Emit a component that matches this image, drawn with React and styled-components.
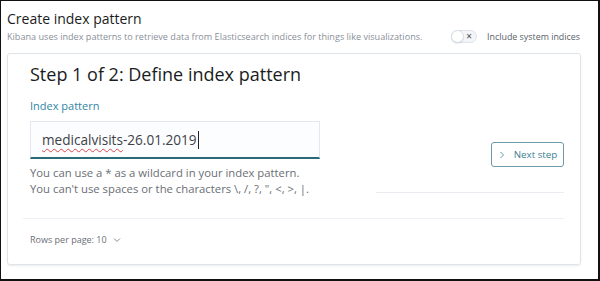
import React from 'react'
import styled, { createGlobalStyle } from 'styled-components'

const Global = createGlobalStyle`
  html, body { margin: 0; padding: 0; background: #fff; }
  body { font-family: "Open Sans", "Noto Sans", sans-serif; color: #1a1c21; }
`

const Frame = styled.div`
  box-sizing: border-box;
  width: 600px;
  height: 281px;
  border: 1px solid #111;
  border-right-width: 2px;
  border-bottom-width: 2px;
  padding: 7px 17px 0 6px;
`

const Header = styled.header`
  display: flex;
  align-items: flex-end;
  justify-content: space-between;
`

const Title = styled.h1`
  margin: 0;
  font-size: 14px;
  font-weight: 500;
  line-height: 22px;
  color: #1a1c21;
`

const Subtitle = styled.p`
  margin: 0;
  font-size: 9.1px;
  line-height: 13px;
  color: #8a8f99;
`

const SwitchWrap = styled.label`
  display: flex;
  align-items: center;
  gap: 10px;
  font-size: 8.9px;
  color: #5a5f69;
  line-height: 13px;
  margin-right: 1px;
`

const Track = styled.span`
  position: relative;
  box-sizing: border-box;
  width: 26px;
  height: 13px;
  border-radius: 7px;
  background: #f3f5f8;
  border: 1px solid #dfe3ea;
  display: flex;
  align-items: center;
  justify-content: flex-end;
  padding-right: 4px;
  font-size: 10px;
  color: #45494f;
`

const Knob = styled.span`
  position: absolute;
  left: -1px;
  top: -1px;
  width: 13px;
  height: 13px;
  box-sizing: border-box;
  border-radius: 50%;
  background: #fff;
  border: 1px solid #d6dbe3;
  box-shadow: 0 1px 1px rgba(0,0,0,0.08);
`

const Panel = styled.section`
  margin-top: 10px;
  box-sizing: border-box;
  height: 212px;
  border: 1px solid #dfe3ea;
  border-radius: 3px;
  box-shadow: 0 1px 2px rgba(0,0,0,0.08);
  padding: 7px 16px 0 15px;
`

const StepTitle = styled.h2`
  margin: 0 0 0 7px;
  font-size: 18px;
  font-weight: 400;
  line-height: 26px;
  color: #1a1c21;
`

const Body = styled.div`
  display: flex;
  justify-content: space-between;
  margin-top: 11px;
  padding-left: 7px;
`

const FormCol = styled.div`
  width: 290px;
`

const Label = styled.div`
  font-size: 11px;
  line-height: 15px;
  color: #2f86a6;
  margin-bottom: 8px;
`

const Input = styled.div`
  box-sizing: border-box;
  height: 38px;
  background: #fcfdfe;
  border: 1px solid #e4e8ee;
  border-bottom: 2px solid #2b6b78;
  padding: 0 0 0 11px;
  display: flex;
  align-items: center;
  font-size: 13.6px;
  color: #3f4247;
`

const Squiggle = styled.span`
  text-decoration: underline wavy #e0464a;
  text-decoration-thickness: 1px;
  text-underline-offset: 3px;
`

const Caret = styled.span`
  display: inline-block;
  width: 1px;
  height: 18px;
  background: #222;
  margin-left: 1px;
`

const Help = styled.p`
  margin: 6px 0 0;
  font-size: 11.3px;
  line-height: 16px;
  color: #6a6e75;
`

const ActionCol = styled.div`
  width: 188px;
  display: flex;
  flex-direction: column;
  align-items: flex-end;
  padding-top: 44px;
`

const NextButton = styled.button`
  box-sizing: border-box;
  height: 25px;
  width: 73px;
  background: #fff;
  border: 1px solid #6d9aa6;
  border-radius: 3px;
  font-family: inherit;
  font-size: 9.8px;
  color: #3c7f92;
  display: flex;
  align-items: center;
  justify-content: center;
  gap: 8px;
  padding: 0;
`

const ShortRule = styled.hr`
  align-self: stretch;
  margin: 25px 0 0;
  border: 0;
  border-top: 1px solid #e9ecf0;
`

const Rule = styled.hr`
  margin: 21px 0 0;
  border: 0;
  border-top: 1px solid #eceff3;
`

const Rows = styled.div`
  margin: 14px 0 0 7px;
  font-size: 9px;
  line-height: 14px;
  color: #6a6e75;
  display: flex;
  align-items: center;
  gap: 6px;
`

const Chevron = ({ dir }) => (
  <svg width="8" height="8" viewBox="0 0 16 16" fill="none" stroke="currentColor" strokeWidth="1.6">
    {dir === 'right' ? <path d="M5 2l6 6-6 6" /> : <path d="M2 5l6 6 6-6" />}
  </svg>
)

export default function App() {
  return (
    <Frame>
      <Global />
      <Header>
        <div>
          <Title>Create index pattern</Title>
          <Subtitle>Kibana uses index patterns to retrieve data from Elasticsearch indices for things like visualizations.</Subtitle>
        </div>
        <SwitchWrap>
          <Track><Knob />×</Track>
          Include system indices
        </SwitchWrap>
      </Header>
      <Panel>
        <StepTitle>Step 1 of 2: Define index pattern</StepTitle>
        <Body>
          <FormCol>
            <Label>Index pattern</Label>
            <Input>
              <Squiggle>medicalvisits</Squiggle>-26.01.2019<Caret />
            </Input>
            <Help>
              You can use a * as a wildcard in your index pattern.<br />
              You can't use spaces or the characters \, /, ?, ", &lt;, &gt;, |.
            </Help>
          </FormCol>
          <ActionCol>
            <NextButton><Chevron dir="right" />Next step</NextButton>
            <ShortRule />
          </ActionCol>
        </Body>
        <Rule />
        <Rows>Rows per page: 10 <Chevron dir="down" /></Rows>
      </Panel>
    </Frame>
  )
}
